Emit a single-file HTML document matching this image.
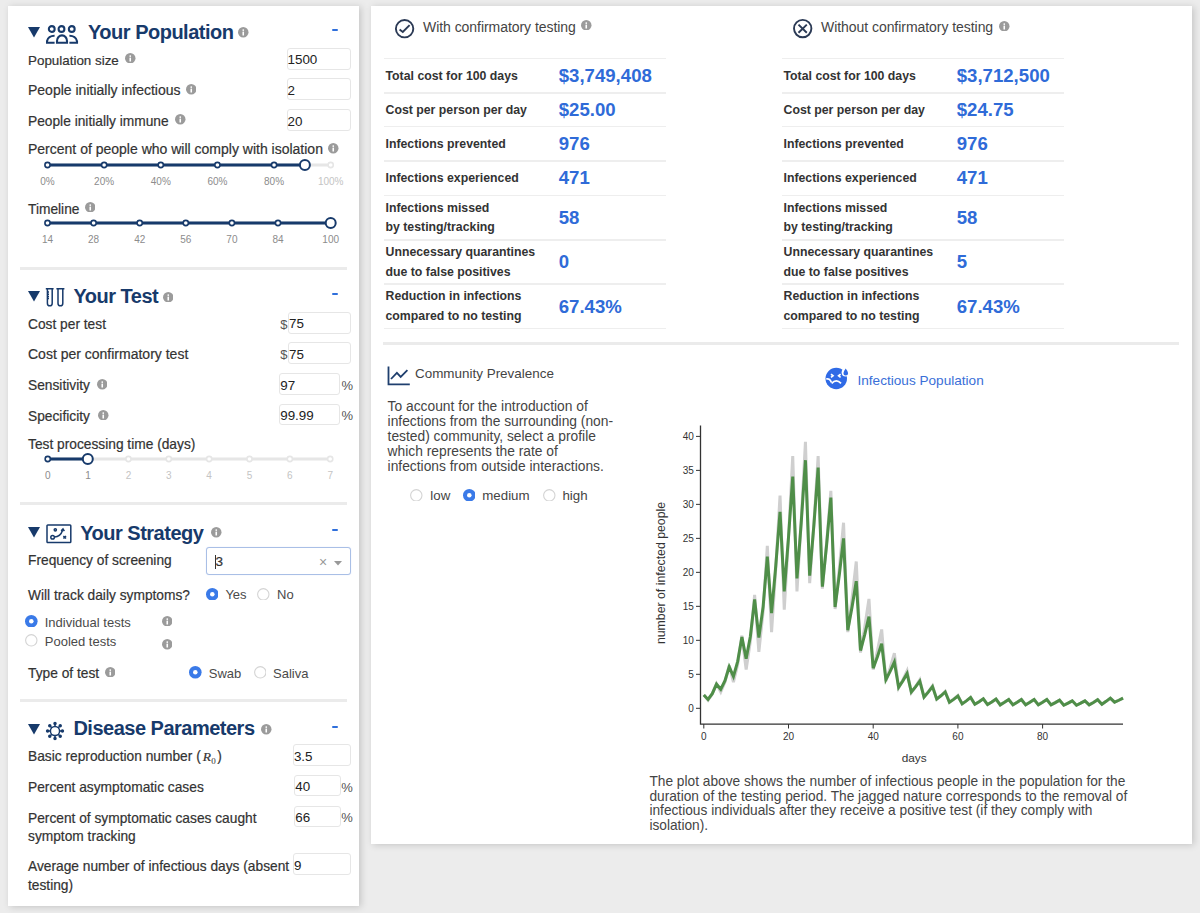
<!DOCTYPE html>
<html><head><meta charset="utf-8"><style>
html,body{margin:0;padding:0;}
body{width:1200px;height:913px;background:#ececec;position:relative;overflow:hidden;font-family:"Liberation Sans",sans-serif;}
.t{position:absolute;white-space:nowrap;}
.s{-webkit-text-stroke:0.2px currentColor;}
.b{position:absolute;display:block;}
.panel{position:absolute;background:#fff;box-shadow:2px 1px 7px rgba(0,0,0,0.17);}
</style></head><body>

<div class="panel" style="left:7.5px;top:5.5px;width:351.5px;height:900px"></div>
<svg class="b" style="left:28px;top:27.00px" width="12" height="11" viewBox="0 0 12 11"><polygon points="0,0 12,0 6,10.5" fill="#173a6b"/></svg>
<svg class="b" style="left:46px;top:24px" width="33" height="20" viewBox="0 0 33 20" fill="none" stroke="#173a6b" stroke-width="2.1"><circle cx="5.75" cy="5" r="2.9"/><circle cx="15.5" cy="5" r="2.9"/><circle cx="25.75" cy="5" r="2.9"/><path d="M8.6 18.8 H1 V17.2 A7.5 6.5 0 0 1 8.6 11.7"/><path d="M11 18.8 V17 A5 5.6 0 0 1 21 17 V18.8 Z"/><path d="M23.4 18.8 H31 V17.2 A7.5 6.5 0 0 0 23.4 11.7"/></svg>
<div class="t" style="left:88.00px;top:19.67px;font-size:20px;line-height:25.0px;font-weight:700;color:#173a6b;letter-spacing:-0.5px;">Your Population</div>
<svg class="b" style="left:238.35px;top:27.15px" width="10.5" height="10.5" viewBox="0 0 10 10"><circle cx="5" cy="5" r="5" fill="#9b9b9b"/><circle cx="5" cy="2.9" r="0.85" fill="#fff"/><rect x="4.25" y="4.3" width="1.5" height="3.9" rx="0.4" fill="#fff"/></svg>
<div class="b" style="left:331.50px;top:29.00px;width:6.30px;height:2.00px;background:#2f6fdb;border-radius:1px;"></div>
<div class="t s" style="left:28.00px;top:52.88px;font-size:13.4px;line-height:16.75px;color:#333;">Population size</div>
<svg class="b" style="left:125.15px;top:52.75px" width="10.5" height="10.5" viewBox="0 0 10 10"><circle cx="5" cy="5" r="5" fill="#9b9b9b"/><circle cx="5" cy="2.9" r="0.85" fill="#fff"/><rect x="4.25" y="4.3" width="1.5" height="3.9" rx="0.4" fill="#fff"/></svg>
<div class="t s" style="left:28.00px;top:82.00px;font-size:14px;line-height:17.5px;color:#333;">People initially infectious</div>
<svg class="b" style="left:185.95px;top:84.15px" width="10.5" height="10.5" viewBox="0 0 10 10"><circle cx="5" cy="5" r="5" fill="#9b9b9b"/><circle cx="5" cy="2.9" r="0.85" fill="#fff"/><rect x="4.25" y="4.3" width="1.5" height="3.9" rx="0.4" fill="#fff"/></svg>
<div class="t s" style="left:28.00px;top:113.04px;font-size:13.75px;line-height:17.19px;color:#333;">People initially immune</div>
<svg class="b" style="left:175.15px;top:114.35px" width="10.5" height="10.5" viewBox="0 0 10 10"><circle cx="5" cy="5" r="5" fill="#9b9b9b"/><circle cx="5" cy="2.9" r="0.85" fill="#fff"/><rect x="4.25" y="4.3" width="1.5" height="3.9" rx="0.4" fill="#fff"/></svg>
<div class="b" style="left:286.50px;top:48.00px;width:64.20px;height:22.00px;border:1px solid #e6e6e6;border-radius:3px;box-sizing:border-box;background:#fff;"></div>
<div class="t" style="left:287.50px;top:52.48px;font-size:13.4px;line-height:16.75px;color:#222;">1500</div>
<div class="b" style="left:286.50px;top:78.30px;width:64.20px;height:21.90px;border:1px solid #e6e6e6;border-radius:3px;box-sizing:border-box;background:#fff;"></div>
<div class="t" style="left:287.50px;top:82.73px;font-size:13.4px;line-height:16.75px;color:#222;">2</div>
<div class="b" style="left:286.50px;top:109.20px;width:64.20px;height:21.90px;border:1px solid #e6e6e6;border-radius:3px;box-sizing:border-box;background:#fff;"></div>
<div class="t" style="left:287.50px;top:113.63px;font-size:13.4px;line-height:16.75px;color:#222;">20</div>
<div class="t s" style="left:28.00px;top:141.20px;font-size:14px;line-height:17.5px;color:#333;">Percent of people who will comply with isolation</div>
<svg class="b" style="left:328.35px;top:143.35px" width="10.5" height="10.5" viewBox="0 0 10 10"><circle cx="5" cy="5" r="5" fill="#9b9b9b"/><circle cx="5" cy="2.9" r="0.85" fill="#fff"/><rect x="4.25" y="4.3" width="1.5" height="3.9" rx="0.4" fill="#fff"/></svg>
<svg class="b" style="left:0;top:156.60px" width="360" height="16" viewBox="0 156.60 360 16">
<line x1="47.5" y1="164.6" x2="330.7" y2="164.6" stroke="#e6e6e6" stroke-width="3"/>
<line x1="47.5" y1="164.6" x2="304.9" y2="164.6" stroke="#173a6b" stroke-width="3"/>
<circle cx="47.50" cy="164.6" r="2.6" fill="#fff" stroke="#173a6b" stroke-width="1.6"/>
<circle cx="104.14" cy="164.6" r="2.6" fill="#fff" stroke="#173a6b" stroke-width="1.6"/>
<circle cx="160.78" cy="164.6" r="2.6" fill="#fff" stroke="#173a6b" stroke-width="1.6"/>
<circle cx="217.42" cy="164.6" r="2.6" fill="#fff" stroke="#173a6b" stroke-width="1.6"/>
<circle cx="274.06" cy="164.6" r="2.6" fill="#fff" stroke="#173a6b" stroke-width="1.6"/>
<circle cx="330.70" cy="164.6" r="2.6" fill="#fff" stroke="#e6e6e6" stroke-width="1.6"/>
<circle cx="304.90" cy="164.6" r="5" fill="#fff" stroke="#173a6b" stroke-width="2"/>
</svg>
<div class="t" style="left:47.50px;top:175.58px;font-size:10px;line-height:12.5px;color:#8c8c8c;transform:translateX(-50%);">0%</div>
<div class="t" style="left:104.14px;top:175.58px;font-size:10px;line-height:12.5px;color:#8c8c8c;transform:translateX(-50%);">20%</div>
<div class="t" style="left:160.78px;top:175.58px;font-size:10px;line-height:12.5px;color:#8c8c8c;transform:translateX(-50%);">40%</div>
<div class="t" style="left:217.42px;top:175.58px;font-size:10px;line-height:12.5px;color:#8c8c8c;transform:translateX(-50%);">60%</div>
<div class="t" style="left:274.06px;top:175.58px;font-size:10px;line-height:12.5px;color:#8c8c8c;transform:translateX(-50%);">80%</div>
<div class="t" style="left:330.70px;top:175.58px;font-size:10px;line-height:12.5px;color:#c4c4c4;transform:translateX(-50%);">100%</div>
<div class="t s" style="left:28.00px;top:200.64px;font-size:13.75px;line-height:17.19px;color:#333;">Timeline</div>
<svg class="b" style="left:84.75px;top:201.95px" width="10.5" height="10.5" viewBox="0 0 10 10"><circle cx="5" cy="5" r="5" fill="#9b9b9b"/><circle cx="5" cy="2.9" r="0.85" fill="#fff"/><rect x="4.25" y="4.3" width="1.5" height="3.9" rx="0.4" fill="#fff"/></svg>
<svg class="b" style="left:0;top:215.30px" width="360" height="16" viewBox="0 215.30 360 16">
<line x1="47.5" y1="223.3" x2="330.7" y2="223.3" stroke="#e6e6e6" stroke-width="3"/>
<line x1="47.5" y1="223.3" x2="330.7" y2="223.3" stroke="#173a6b" stroke-width="3"/>
<circle cx="47.50" cy="223.3" r="2.6" fill="#fff" stroke="#173a6b" stroke-width="1.6"/>
<circle cx="93.60" cy="223.3" r="2.6" fill="#fff" stroke="#173a6b" stroke-width="1.6"/>
<circle cx="139.70" cy="223.3" r="2.6" fill="#fff" stroke="#173a6b" stroke-width="1.6"/>
<circle cx="185.80" cy="223.3" r="2.6" fill="#fff" stroke="#173a6b" stroke-width="1.6"/>
<circle cx="231.90" cy="223.3" r="2.6" fill="#fff" stroke="#173a6b" stroke-width="1.6"/>
<circle cx="278.00" cy="223.3" r="2.6" fill="#fff" stroke="#173a6b" stroke-width="1.6"/>
<circle cx="330.70" cy="223.3" r="2.6" fill="#fff" stroke="#173a6b" stroke-width="1.6"/>
<circle cx="330.70" cy="223.3" r="5" fill="#fff" stroke="#173a6b" stroke-width="2"/>
</svg>
<div class="t" style="left:47.50px;top:234.19px;font-size:10px;line-height:12.5px;color:#8c8c8c;transform:translateX(-50%);">14</div>
<div class="t" style="left:93.60px;top:234.19px;font-size:10px;line-height:12.5px;color:#8c8c8c;transform:translateX(-50%);">28</div>
<div class="t" style="left:139.70px;top:234.19px;font-size:10px;line-height:12.5px;color:#8c8c8c;transform:translateX(-50%);">42</div>
<div class="t" style="left:185.80px;top:234.19px;font-size:10px;line-height:12.5px;color:#8c8c8c;transform:translateX(-50%);">56</div>
<div class="t" style="left:231.90px;top:234.19px;font-size:10px;line-height:12.5px;color:#8c8c8c;transform:translateX(-50%);">70</div>
<div class="t" style="left:278.00px;top:234.19px;font-size:10px;line-height:12.5px;color:#8c8c8c;transform:translateX(-50%);">84</div>
<div class="t" style="left:330.70px;top:234.19px;font-size:10px;line-height:12.5px;color:#8c8c8c;transform:translateX(-50%);">100</div>
<div class="b" style="left:20.00px;top:266.50px;width:327.00px;height:3.00px;background:#ebebeb;"></div>
<svg class="b" style="left:28px;top:291.00px" width="12" height="11" viewBox="0 0 12 11"><polygon points="0,0 12,0 6,10.5" fill="#173a6b"/></svg>
<svg class="b" style="left:45px;top:287px" width="21" height="21" viewBox="0 0 21 21" fill="none" stroke="#173a6b" stroke-width="1.5"><path d="M0.8 1.8 H8.6 M2.4 1.8 V16.2 A2.4 2.6 0 0 0 7.2 16.2 V1.8"/><path d="M2.4 5 H4 M2.4 7.2 H4 M2.4 9.4 H4 M2.4 11.6 H4"/><path d="M11.4 1.8 H19.4 M13 1.8 V16.2 A2.4 2.6 0 0 0 17.8 16.2 V1.8"/></svg>
<div class="t" style="left:73.40px;top:284.37px;font-size:20px;line-height:25.0px;font-weight:700;color:#173a6b;letter-spacing:-0.5px;">Your Test</div>
<svg class="b" style="left:162.75px;top:291.75px" width="10.5" height="10.5" viewBox="0 0 10 10"><circle cx="5" cy="5" r="5" fill="#9b9b9b"/><circle cx="5" cy="2.9" r="0.85" fill="#fff"/><rect x="4.25" y="4.3" width="1.5" height="3.9" rx="0.4" fill="#fff"/></svg>
<div class="b" style="left:331.50px;top:293.00px;width:6.30px;height:2.00px;background:#2f6fdb;border-radius:1px;"></div>
<div class="t s" style="left:28.00px;top:315.74px;font-size:13.75px;line-height:17.19px;color:#333;">Cost per test</div>
<div class="t s" style="left:28.00px;top:346.30px;font-size:14px;line-height:17.5px;color:#333;">Cost per confirmatory test</div>
<div class="t s" style="left:28.00px;top:376.74px;font-size:13.75px;line-height:17.19px;color:#333;">Sensitivity</div>
<svg class="b" style="left:96.55px;top:379.05px" width="10.5" height="10.5" viewBox="0 0 10 10"><circle cx="5" cy="5" r="5" fill="#9b9b9b"/><circle cx="5" cy="2.9" r="0.85" fill="#fff"/><rect x="4.25" y="4.3" width="1.5" height="3.9" rx="0.4" fill="#fff"/></svg>
<div class="t s" style="left:28.00px;top:407.54px;font-size:13.75px;line-height:17.19px;color:#333;">Specificity</div>
<svg class="b" style="left:98.05px;top:409.75px" width="10.5" height="10.5" viewBox="0 0 10 10"><circle cx="5" cy="5" r="5" fill="#9b9b9b"/><circle cx="5" cy="2.9" r="0.85" fill="#fff"/><rect x="4.25" y="4.3" width="1.5" height="3.9" rx="0.4" fill="#fff"/></svg>
<div class="t" style="left:280.30px;top:316.57px;font-size:13px;line-height:16.25px;color:#555;">$</div>
<div class="b" style="left:288.10px;top:311.70px;width:62.65px;height:22.20px;border:1px solid #e6e6e6;border-radius:3px;box-sizing:border-box;background:#fff;"></div>
<div class="t" style="left:289.10px;top:316.28px;font-size:13.4px;line-height:16.75px;color:#222;">75</div>
<div class="t" style="left:280.30px;top:347.37px;font-size:13px;line-height:16.25px;color:#555;">$</div>
<div class="b" style="left:288.10px;top:342.40px;width:62.65px;height:21.90px;border:1px solid #e6e6e6;border-radius:3px;box-sizing:border-box;background:#fff;"></div>
<div class="t" style="left:289.10px;top:346.83px;font-size:13.4px;line-height:16.75px;color:#222;">75</div>
<div class="b" style="left:279.20px;top:373.30px;width:61.20px;height:21.70px;border:1px solid #e6e6e6;border-radius:3px;box-sizing:border-box;background:#fff;"></div>
<div class="t" style="left:280.20px;top:377.63px;font-size:13.4px;line-height:16.75px;color:#222;">97</div>
<div class="t" style="left:341.40px;top:377.87px;font-size:13px;line-height:16.25px;color:#555;">%</div>
<div class="b" style="left:279.20px;top:403.60px;width:61.20px;height:21.60px;border:1px solid #e6e6e6;border-radius:3px;box-sizing:border-box;background:#fff;"></div>
<div class="t" style="left:280.20px;top:407.88px;font-size:13.4px;line-height:16.75px;color:#222;">99.99</div>
<div class="t" style="left:341.40px;top:408.17px;font-size:13px;line-height:16.25px;color:#555;">%</div>
<div class="t s" style="left:28.00px;top:435.94px;font-size:13.75px;line-height:17.19px;color:#333;">Test processing time (days)</div>
<svg class="b" style="left:0;top:450.50px" width="360" height="16" viewBox="0 450.50 360 16">
<line x1="47.75" y1="458.5" x2="330.2" y2="458.5" stroke="#e6e6e6" stroke-width="3"/>
<line x1="47.75" y1="458.5" x2="87.8" y2="458.5" stroke="#173a6b" stroke-width="3"/>
<circle cx="47.75" cy="458.5" r="2.6" fill="#fff" stroke="#173a6b" stroke-width="1.6"/>
<circle cx="88.10" cy="458.5" r="2.6" fill="#fff" stroke="#173a6b" stroke-width="1.6"/>
<circle cx="128.45" cy="458.5" r="2.6" fill="#fff" stroke="#e6e6e6" stroke-width="1.6"/>
<circle cx="168.80" cy="458.5" r="2.6" fill="#fff" stroke="#e6e6e6" stroke-width="1.6"/>
<circle cx="209.15" cy="458.5" r="2.6" fill="#fff" stroke="#e6e6e6" stroke-width="1.6"/>
<circle cx="249.50" cy="458.5" r="2.6" fill="#fff" stroke="#e6e6e6" stroke-width="1.6"/>
<circle cx="289.85" cy="458.5" r="2.6" fill="#fff" stroke="#e6e6e6" stroke-width="1.6"/>
<circle cx="330.20" cy="458.5" r="2.6" fill="#fff" stroke="#e6e6e6" stroke-width="1.6"/>
<circle cx="87.80" cy="458.5" r="5" fill="#fff" stroke="#173a6b" stroke-width="2"/>
</svg>
<div class="t" style="left:47.75px;top:469.63px;font-size:10px;line-height:12.5px;color:#8c8c8c;transform:translateX(-50%);">0</div>
<div class="t" style="left:88.10px;top:469.63px;font-size:10px;line-height:12.5px;color:#8c8c8c;transform:translateX(-50%);">1</div>
<div class="t" style="left:128.45px;top:469.63px;font-size:10px;line-height:12.5px;color:#c4c4c4;transform:translateX(-50%);">2</div>
<div class="t" style="left:168.80px;top:469.63px;font-size:10px;line-height:12.5px;color:#c4c4c4;transform:translateX(-50%);">3</div>
<div class="t" style="left:209.15px;top:469.63px;font-size:10px;line-height:12.5px;color:#c4c4c4;transform:translateX(-50%);">4</div>
<div class="t" style="left:249.50px;top:469.63px;font-size:10px;line-height:12.5px;color:#c4c4c4;transform:translateX(-50%);">5</div>
<div class="t" style="left:289.85px;top:469.63px;font-size:10px;line-height:12.5px;color:#c4c4c4;transform:translateX(-50%);">6</div>
<div class="t" style="left:330.20px;top:469.63px;font-size:10px;line-height:12.5px;color:#c4c4c4;transform:translateX(-50%);">7</div>
<div class="b" style="left:20.00px;top:501.50px;width:327.00px;height:3.00px;background:#ebebeb;"></div>
<svg class="b" style="left:28px;top:527.00px" width="12" height="11" viewBox="0 0 12 11"><polygon points="0,0 12,0 6,10.5" fill="#173a6b"/></svg>
<svg class="b" style="left:46px;top:523.5px" width="26" height="20" viewBox="0 0 26 20" fill="none" stroke="#173a6b" stroke-width="1.5"><rect x="1" y="1" width="23.8" height="17.6" rx="0.8"/><circle cx="6.6" cy="13.2" r="1.8"/><circle cx="9.3" cy="5.8" r="1.1"/><path d="M8.4 13.1 Q14.5 12.8 16.6 6.3"/><path d="M15.2 6.9 L17 5.1 L18.3 7.2" stroke-width="1.6"/><path d="M17.4 11.9 L20 14.6 M20 11.9 L17.4 14.6"/></svg>
<div class="t" style="left:80.20px;top:520.67px;font-size:20px;line-height:25.0px;font-weight:700;color:#173a6b;letter-spacing:-0.5px;">Your Strategy</div>
<svg class="b" style="left:211.25px;top:527.15px" width="10.5" height="10.5" viewBox="0 0 10 10"><circle cx="5" cy="5" r="5" fill="#9b9b9b"/><circle cx="5" cy="2.9" r="0.85" fill="#fff"/><rect x="4.25" y="4.3" width="1.5" height="3.9" rx="0.4" fill="#fff"/></svg>
<div class="b" style="left:331.50px;top:529.00px;width:6.30px;height:2.00px;background:#2f6fdb;border-radius:1px;"></div>
<div class="t s" style="left:28.00px;top:552.04px;font-size:13.75px;line-height:17.19px;color:#333;">Frequency of screening</div>
<div class="b" style="left:205.60px;top:547.40px;width:145.20px;height:28.00px;border:1px solid #a9bfe6;border-radius:3px;box-sizing:border-box;background:#fff;box-shadow:0 0 1px rgba(80,130,220,0.3);"></div>
<div class="b" style="left:214.60px;top:555.00px;width:1.00px;height:14.00px;background:#333;"></div>
<div class="t s" style="left:215.50px;top:553.98px;font-size:13.5px;line-height:16.88px;color:#333;">3</div>
<div class="t" style="left:323.20px;top:553.50px;font-size:14px;line-height:17.5px;color:#999;transform:translateX(-50%);">×</div>
<svg class="b" style="left:334px;top:560.5px" width="8" height="5" viewBox="0 0 8 5"><polygon points="0,0 8,0 4,4.5" fill="#999"/></svg>
<div class="t s" style="left:28.00px;top:586.54px;font-size:13.75px;line-height:17.19px;color:#333;">Will track daily symptoms?</div>
<svg class="b" style="left:205.50px;top:587.50px" width="12.6" height="12.6" viewBox="0 0 12.6 12.6"><circle cx="6.3" cy="6.3" r="6.3" fill="#3a7ae8"/><circle cx="6.3" cy="6.3" r="2.27" fill="#fff"/></svg>
<div class="t" style="left:225.40px;top:587.27px;font-size:13px;line-height:16.25px;color:#4a4a4a;">Yes</div>
<svg class="b" style="left:257.35px;top:587.50px" width="12.6" height="12.6" viewBox="0 0 12.6 12.6"><circle cx="6.3" cy="6.3" r="5.70" fill="#fff" stroke="#d4d4d4" stroke-width="1.1"/></svg>
<div class="t" style="left:277.10px;top:587.27px;font-size:13px;line-height:16.25px;color:#4a4a4a;">No</div>
<svg class="b" style="left:25.30px;top:614.90px" width="12.6" height="12.6" viewBox="0 0 12.6 12.6"><circle cx="6.3" cy="6.3" r="6.3" fill="#3a7ae8"/><circle cx="6.3" cy="6.3" r="2.27" fill="#fff"/></svg>
<div class="t" style="left:44.75px;top:614.72px;font-size:13px;line-height:16.25px;color:#4a4a4a;">Individual tests</div>
<svg class="b" style="left:161.55px;top:615.50px" width="10.5" height="10.5" viewBox="0 0 10 10"><circle cx="5" cy="5" r="5" fill="#9b9b9b"/><circle cx="5" cy="2.9" r="0.85" fill="#fff"/><rect x="4.25" y="4.3" width="1.5" height="3.9" rx="0.4" fill="#fff"/></svg>
<svg class="b" style="left:25.30px;top:633.95px" width="12.6" height="12.6" viewBox="0 0 12.6 12.6"><circle cx="6.3" cy="6.3" r="5.70" fill="#fff" stroke="#d4d4d4" stroke-width="1.1"/></svg>
<div class="t" style="left:44.75px;top:633.77px;font-size:13px;line-height:16.25px;color:#4a4a4a;">Pooled tests</div>
<svg class="b" style="left:161.55px;top:639.05px" width="10.5" height="10.5" viewBox="0 0 10 10"><circle cx="5" cy="5" r="5" fill="#9b9b9b"/><circle cx="5" cy="2.9" r="0.85" fill="#fff"/><rect x="4.25" y="4.3" width="1.5" height="3.9" rx="0.4" fill="#fff"/></svg>
<div class="t s" style="left:28.00px;top:664.99px;font-size:13.75px;line-height:17.19px;color:#333;">Type of test</div>
<svg class="b" style="left:104.55px;top:666.50px" width="10.5" height="10.5" viewBox="0 0 10 10"><circle cx="5" cy="5" r="5" fill="#9b9b9b"/><circle cx="5" cy="2.9" r="0.85" fill="#fff"/><rect x="4.25" y="4.3" width="1.5" height="3.9" rx="0.4" fill="#fff"/></svg>
<svg class="b" style="left:189.45px;top:666.00px" width="12.6" height="12.6" viewBox="0 0 12.6 12.6"><circle cx="6.3" cy="6.3" r="6.3" fill="#3a7ae8"/><circle cx="6.3" cy="6.3" r="2.27" fill="#fff"/></svg>
<div class="t" style="left:208.80px;top:665.72px;font-size:13px;line-height:16.25px;color:#4a4a4a;">Swab</div>
<svg class="b" style="left:253.60px;top:666.00px" width="12.6" height="12.6" viewBox="0 0 12.6 12.6"><circle cx="6.3" cy="6.3" r="5.70" fill="#fff" stroke="#d4d4d4" stroke-width="1.1"/></svg>
<div class="t" style="left:273.00px;top:665.72px;font-size:13px;line-height:16.25px;color:#4a4a4a;">Saliva</div>
<div class="b" style="left:20.00px;top:698.50px;width:327.00px;height:3.00px;background:#ebebeb;"></div>
<svg class="b" style="left:28px;top:723.50px" width="12" height="11" viewBox="0 0 12 11"><polygon points="0,0 12,0 6,10.5" fill="#173a6b"/></svg>
<svg class="b" style="left:45.25px;top:720.5px" width="20" height="20" viewBox="0 0 20 20" fill="none" stroke="#173a6b" stroke-width="1.5"><circle cx="10" cy="10" r="4.6" /><line x1="14.60" y1="10.00" x2="17.40" y2="10.00"/><circle cx="17.40" cy="10.00" r="1.0" fill="#173a6b"/><line x1="13.25" y1="13.25" x2="15.23" y2="15.23"/><circle cx="15.23" cy="15.23" r="1.0" fill="#173a6b"/><line x1="10.00" y1="14.60" x2="10.00" y2="17.40"/><circle cx="10.00" cy="17.40" r="1.0" fill="#173a6b"/><line x1="6.75" y1="13.25" x2="4.77" y2="15.23"/><circle cx="4.77" cy="15.23" r="1.0" fill="#173a6b"/><line x1="5.40" y1="10.00" x2="2.60" y2="10.00"/><circle cx="2.60" cy="10.00" r="1.0" fill="#173a6b"/><line x1="6.75" y1="6.75" x2="4.77" y2="4.77"/><circle cx="4.77" cy="4.77" r="1.0" fill="#173a6b"/><line x1="10.00" y1="5.40" x2="10.00" y2="2.60"/><circle cx="10.00" cy="2.60" r="1.0" fill="#173a6b"/><line x1="13.25" y1="6.75" x2="15.23" y2="4.77"/><circle cx="15.23" cy="4.77" r="1.0" fill="#173a6b"/></svg>
<div class="t" style="left:73.40px;top:715.67px;font-size:20px;line-height:25.0px;font-weight:700;color:#173a6b;letter-spacing:-0.5px;">Disease Parameters</div>
<svg class="b" style="left:261.45px;top:724.05px" width="10.5" height="10.5" viewBox="0 0 10 10"><circle cx="5" cy="5" r="5" fill="#9b9b9b"/><circle cx="5" cy="2.9" r="0.85" fill="#fff"/><rect x="4.25" y="4.3" width="1.5" height="3.9" rx="0.4" fill="#fff"/></svg>
<div class="b" style="left:331.50px;top:726.30px;width:6.30px;height:2.00px;background:#2f6fdb;border-radius:1px;"></div>
<div class="t s" style="left:28.00px;top:748.24px;font-size:13.75px;line-height:17.19px;color:#333;">Basic reproduction number (<span style="margin-left:2px;font-family:'Liberation Serif';font-style:italic;font-size:13.5px">R</span><span style="font-family:'Liberation Serif';font-size:9px;position:relative;top:2.5px;margin-left:0.3px;-webkit-text-stroke:0">0</span><span style="margin-left:1.5px">)</span></div>
<div class="t s" style="left:28.00px;top:779.14px;font-size:13.75px;line-height:17.19px;color:#333;">Percent asymptomatic cases</div>
<div class="t s" style="left:28.00px;top:809.64px;font-size:13.75px;line-height:17.19px;color:#333;">Percent of symptomatic cases caught</div>
<div class="t s" style="left:28.00px;top:828.44px;font-size:13.75px;line-height:17.19px;color:#333;">symptom tracking</div>
<div class="t s" style="left:28.00px;top:858.34px;font-size:13.75px;line-height:17.19px;color:#333;">Average number of infectious days (absent</div>
<div class="t s" style="left:28.00px;top:876.84px;font-size:13.75px;line-height:17.19px;color:#333;">testing)</div>
<div class="b" style="left:292.90px;top:744.40px;width:57.90px;height:21.70px;border:1px solid #e6e6e6;border-radius:3px;box-sizing:border-box;background:#fff;"></div>
<div class="t" style="left:293.90px;top:748.73px;font-size:13.4px;line-height:16.75px;color:#222;">3.5</div>
<div class="b" style="left:294.20px;top:774.80px;width:46.50px;height:21.70px;border:1px solid #e6e6e6;border-radius:3px;box-sizing:border-box;background:#fff;"></div>
<div class="t" style="left:295.20px;top:779.13px;font-size:13.4px;line-height:16.75px;color:#222;">40</div>
<div class="t" style="left:341.20px;top:779.77px;font-size:13px;line-height:16.25px;color:#555;">%</div>
<div class="b" style="left:294.20px;top:805.50px;width:46.50px;height:21.70px;border:1px solid #e6e6e6;border-radius:3px;box-sizing:border-box;background:#fff;"></div>
<div class="t" style="left:295.20px;top:809.83px;font-size:13.4px;line-height:16.75px;color:#222;">66</div>
<div class="t" style="left:341.20px;top:810.47px;font-size:13px;line-height:16.25px;color:#555;">%</div>
<div class="b" style="left:292.90px;top:853.40px;width:57.90px;height:21.70px;border:1px solid #e6e6e6;border-radius:3px;box-sizing:border-box;background:#fff;"></div>
<div class="t" style="left:293.90px;top:857.73px;font-size:13.4px;line-height:16.75px;color:#222;">9</div>
<div class="panel" style="left:371px;top:5.5px;width:821px;height:838.3px"></div>
<svg class="b" style="left:394px;top:17.5px" width="21" height="21" viewBox="0 0 21 21" fill="none" stroke="#2b3a55" stroke-width="1.9"><circle cx="10.6" cy="10.7" r="8.7"/><path d="M5.6 11.4 L8.8 14 L15.6 7.2"/></svg>
<div class="t" style="left:423.00px;top:18.50px;font-size:14px;line-height:17.5px;color:#444;letter-spacing:-0.05px;">With confirmatory testing</div>
<svg class="b" style="left:581.35px;top:19.75px" width="10.5" height="10.5" viewBox="0 0 10 10"><circle cx="5" cy="5" r="5" fill="#9b9b9b"/><circle cx="5" cy="2.9" r="0.85" fill="#fff"/><rect x="4.25" y="4.3" width="1.5" height="3.9" rx="0.4" fill="#fff"/></svg>
<svg class="b" style="left:792px;top:17.5px" width="21" height="21" viewBox="0 0 21 21" fill="none" stroke="#2b3a55" stroke-width="1.9"><circle cx="10.7" cy="10.6" r="8.7"/><path d="M6.5 6.6 L14.8 14.8 M14.8 6.6 L6.5 14.8"/></svg>
<div class="t" style="left:821.00px;top:18.50px;font-size:14px;line-height:17.5px;color:#444;letter-spacing:-0.05px;">Without confirmatory testing</div>
<svg class="b" style="left:999.25px;top:20.75px" width="10.5" height="10.5" viewBox="0 0 10 10"><circle cx="5" cy="5" r="5" fill="#9b9b9b"/><circle cx="5" cy="2.9" r="0.85" fill="#fff"/><rect x="4.25" y="4.3" width="1.5" height="3.9" rx="0.4" fill="#fff"/></svg>
<div class="b" style="left:384.00px;top:57.50px;width:282.00px;height:1.50px;background:#eeeeee;"></div>
<div class="b" style="left:384.00px;top:92.00px;width:282.00px;height:1.50px;background:#eeeeee;"></div>
<div class="b" style="left:384.00px;top:125.75px;width:282.00px;height:1.50px;background:#eeeeee;"></div>
<div class="b" style="left:384.00px;top:160.00px;width:282.00px;height:1.50px;background:#eeeeee;"></div>
<div class="b" style="left:384.00px;top:194.50px;width:282.00px;height:1.50px;background:#eeeeee;"></div>
<div class="b" style="left:384.00px;top:239.00px;width:282.00px;height:1.50px;background:#eeeeee;"></div>
<div class="b" style="left:384.00px;top:283.25px;width:282.00px;height:1.50px;background:#eeeeee;"></div>
<div class="b" style="left:384.00px;top:327.75px;width:282.00px;height:1.50px;background:#eeeeee;"></div>
<div class="t" style="left:385.50px;top:68.65px;font-size:12.3px;line-height:15.38px;font-weight:700;color:#333;">Total cost for 100 days</div>
<div class="t" style="left:558.75px;top:63.93px;font-size:18.6px;line-height:23.25px;font-weight:700;color:#2f6bd8;">$3,749,408</div>
<div class="t" style="left:385.50px;top:103.15px;font-size:12.3px;line-height:15.38px;font-weight:700;color:#333;">Cost per person per day</div>
<div class="t" style="left:558.75px;top:98.43px;font-size:18.6px;line-height:23.25px;font-weight:700;color:#2f6bd8;">$25.00</div>
<div class="t" style="left:385.50px;top:136.90px;font-size:12.3px;line-height:15.38px;font-weight:700;color:#333;">Infections prevented</div>
<div class="t" style="left:558.75px;top:132.18px;font-size:18.6px;line-height:23.25px;font-weight:700;color:#2f6bd8;">976</div>
<div class="t" style="left:385.50px;top:171.15px;font-size:12.3px;line-height:15.38px;font-weight:700;color:#333;">Infections experienced</div>
<div class="t" style="left:558.75px;top:166.43px;font-size:18.6px;line-height:23.25px;font-weight:700;color:#2f6bd8;">471</div>
<div class="t" style="left:385.50px;top:200.65px;font-size:12.3px;line-height:15.38px;font-weight:700;color:#333;">Infections missed</div>
<div class="t" style="left:385.50px;top:220.45px;font-size:12.3px;line-height:15.38px;font-weight:700;color:#333;">by testing/tracking</div>
<div class="t" style="left:558.75px;top:205.93px;font-size:18.6px;line-height:23.25px;font-weight:700;color:#2f6bd8;">58</div>
<div class="t" style="left:385.50px;top:245.15px;font-size:12.3px;line-height:15.38px;font-weight:700;color:#333;">Unnecessary quarantines</div>
<div class="t" style="left:385.50px;top:264.95px;font-size:12.3px;line-height:15.38px;font-weight:700;color:#333;">due to false positives</div>
<div class="t" style="left:558.75px;top:250.43px;font-size:18.6px;line-height:23.25px;font-weight:700;color:#2f6bd8;">0</div>
<div class="t" style="left:385.50px;top:289.40px;font-size:12.3px;line-height:15.38px;font-weight:700;color:#333;">Reduction in infections</div>
<div class="t" style="left:385.50px;top:309.20px;font-size:12.3px;line-height:15.38px;font-weight:700;color:#333;">compared to no testing</div>
<div class="t" style="left:558.75px;top:294.68px;font-size:18.6px;line-height:23.25px;font-weight:700;color:#2f6bd8;">67.43%</div>
<div class="b" style="left:782.00px;top:57.50px;width:282.00px;height:1.50px;background:#eeeeee;"></div>
<div class="b" style="left:782.00px;top:92.00px;width:282.00px;height:1.50px;background:#eeeeee;"></div>
<div class="b" style="left:782.00px;top:125.75px;width:282.00px;height:1.50px;background:#eeeeee;"></div>
<div class="b" style="left:782.00px;top:160.00px;width:282.00px;height:1.50px;background:#eeeeee;"></div>
<div class="b" style="left:782.00px;top:194.50px;width:282.00px;height:1.50px;background:#eeeeee;"></div>
<div class="b" style="left:782.00px;top:239.00px;width:282.00px;height:1.50px;background:#eeeeee;"></div>
<div class="b" style="left:782.00px;top:283.25px;width:282.00px;height:1.50px;background:#eeeeee;"></div>
<div class="b" style="left:782.00px;top:327.75px;width:282.00px;height:1.50px;background:#eeeeee;"></div>
<div class="t" style="left:783.50px;top:68.65px;font-size:12.3px;line-height:15.38px;font-weight:700;color:#333;">Total cost for 100 days</div>
<div class="t" style="left:956.75px;top:63.93px;font-size:18.6px;line-height:23.25px;font-weight:700;color:#2f6bd8;">$3,712,500</div>
<div class="t" style="left:783.50px;top:103.15px;font-size:12.3px;line-height:15.38px;font-weight:700;color:#333;">Cost per person per day</div>
<div class="t" style="left:956.75px;top:98.43px;font-size:18.6px;line-height:23.25px;font-weight:700;color:#2f6bd8;">$24.75</div>
<div class="t" style="left:783.50px;top:136.90px;font-size:12.3px;line-height:15.38px;font-weight:700;color:#333;">Infections prevented</div>
<div class="t" style="left:956.75px;top:132.18px;font-size:18.6px;line-height:23.25px;font-weight:700;color:#2f6bd8;">976</div>
<div class="t" style="left:783.50px;top:171.15px;font-size:12.3px;line-height:15.38px;font-weight:700;color:#333;">Infections experienced</div>
<div class="t" style="left:956.75px;top:166.43px;font-size:18.6px;line-height:23.25px;font-weight:700;color:#2f6bd8;">471</div>
<div class="t" style="left:783.50px;top:200.65px;font-size:12.3px;line-height:15.38px;font-weight:700;color:#333;">Infections missed</div>
<div class="t" style="left:783.50px;top:220.45px;font-size:12.3px;line-height:15.38px;font-weight:700;color:#333;">by testing/tracking</div>
<div class="t" style="left:956.75px;top:205.93px;font-size:18.6px;line-height:23.25px;font-weight:700;color:#2f6bd8;">58</div>
<div class="t" style="left:783.50px;top:245.15px;font-size:12.3px;line-height:15.38px;font-weight:700;color:#333;">Unnecessary quarantines</div>
<div class="t" style="left:783.50px;top:264.95px;font-size:12.3px;line-height:15.38px;font-weight:700;color:#333;">due to false positives</div>
<div class="t" style="left:956.75px;top:250.43px;font-size:18.6px;line-height:23.25px;font-weight:700;color:#2f6bd8;">5</div>
<div class="t" style="left:783.50px;top:289.40px;font-size:12.3px;line-height:15.38px;font-weight:700;color:#333;">Reduction in infections</div>
<div class="t" style="left:783.50px;top:309.20px;font-size:12.3px;line-height:15.38px;font-weight:700;color:#333;">compared to no testing</div>
<div class="t" style="left:956.75px;top:294.68px;font-size:18.6px;line-height:23.25px;font-weight:700;color:#2f6bd8;">67.43%</div>
<div class="b" style="left:383.00px;top:341.50px;width:796.00px;height:3.00px;background:#ebebeb;"></div>
<svg class="b" style="left:386px;top:365px" width="26" height="22" viewBox="0 0 26 22" fill="none" stroke="#1f3f6e" stroke-width="1.8"><path d="M2.5 1.5 V19.3 H23.8"/><path d="M5 14 L10.9 7.8 L14.7 11.9 L21.4 5.2"/></svg>
<div class="t" style="left:415.00px;top:366.43px;font-size:13.45px;line-height:16.81px;color:#444;">Community Prevalence</div>
<div class="t" style="left:387.60px;top:397.79px;font-size:13.8px;line-height:17.25px;color:#444;">To account for the introduction of</div>
<div class="t" style="left:387.60px;top:412.94px;font-size:13.8px;line-height:17.25px;color:#444;">infections from the surrounding (non-</div>
<div class="t" style="left:387.60px;top:428.09px;font-size:13.8px;line-height:17.25px;color:#444;">tested) community, select a profile</div>
<div class="t" style="left:387.60px;top:443.29px;font-size:13.8px;line-height:17.25px;color:#444;">which represents the rate of</div>
<div class="t" style="left:387.60px;top:458.09px;font-size:13.8px;line-height:17.25px;color:#444;">infections from outside interactions.</div>
<svg class="b" style="left:410.30px;top:488.80px" width="12.6" height="12.6" viewBox="0 0 12.6 12.6"><circle cx="6.3" cy="6.3" r="5.70" fill="#fff" stroke="#d4d4d4" stroke-width="1.1"/></svg>
<div class="t" style="left:430.30px;top:488.18px;font-size:13.3px;line-height:16.62px;color:#444;">low</div>
<svg class="b" style="left:462.70px;top:488.80px" width="12.6" height="12.6" viewBox="0 0 12.6 12.6"><circle cx="6.3" cy="6.3" r="6.3" fill="#3a7ae8"/><circle cx="6.3" cy="6.3" r="2.27" fill="#fff"/></svg>
<div class="t" style="left:482.30px;top:488.18px;font-size:13.3px;line-height:16.62px;color:#444;">medium</div>
<svg class="b" style="left:542.95px;top:488.80px" width="12.6" height="12.6" viewBox="0 0 12.6 12.6"><circle cx="6.3" cy="6.3" r="5.70" fill="#fff" stroke="#d4d4d4" stroke-width="1.1"/></svg>
<div class="t" style="left:562.40px;top:488.18px;font-size:13.3px;line-height:16.62px;color:#444;">high</div>
<svg class="b" style="left:824px;top:366px" width="26" height="25" viewBox="0 0 26 25"><circle cx="12.25" cy="12.5" r="10.75" fill="#2f6ae6"/><circle cx="21.6" cy="6.6" r="4.0" fill="#fff"/><path d="M21.7 2.6 Q24.2 5.8 24.1 7.2 A2.35 2.35 0 0 1 19.4 7.2 Q19.3 5.8 21.7 2.6 Z" fill="#2f6ae6"/><path d="M7 8.2 L9 9.8 L7 11.4" stroke="#fff" stroke-width="1.7" fill="none"/><path d="M16.6 8.2 L14.6 9.8 L16.6 11.4" stroke="#fff" stroke-width="1.7" fill="none"/><path d="M7.6 17.3 Q12.3 12.3 17 17.3" stroke="#fff" stroke-width="1.8" fill="none"/><path d="M2.2 13 Q5 12.3 6.2 14.2 L7.4 16.4" stroke="#fff" stroke-width="1.7" fill="none"/></svg>
<div class="t" style="left:857.50px;top:372.14px;font-size:13.6px;line-height:17.0px;color:#3a6fd8;">Infectious Population</div>
<svg class="b" style="left:0;top:0" width="1200" height="913" viewBox="0 0 1200 913">
<path d="M703.80,694.70 L708.03,700.14 L712.27,693.94 L716.50,683.83 L720.74,691.99 L724.97,681.91 L729.21,665.48 L733.44,682.13 L737.68,664.44 L741.91,635.57 L746.15,669.55 L750.38,641.14 L754.62,594.78 L758.86,651.88 L763.09,611.59 L767.32,545.84 L771.56,632.17 L775.79,567.95 L780.03,495.54 L784.26,609.74 L788.50,537.53 L792.73,456.11 L796.97,591.38 L801.20,521.10 L805.44,441.84 L809.67,583.23 L813.91,523.48 L818.14,456.11 L822.38,588.66 L826.62,542.66 L830.85,490.78 L835.08,609.06 L839.32,568.48 L843.55,522.73 L847.79,632.17 L852.02,598.94 L856.26,561.47 L860.50,652.56 L864.73,627.32 L868.96,598.86 L873.20,669.55 L877.43,650.70 L881.67,629.45 L885.90,681.11 L890.14,668.01 L894.38,653.24 L898.61,687.91 L902.85,679.92 L907.08,670.91 L911.31,692.67 L915.55,686.60 L919.78,679.75 L924.02,697.08 L928.25,691.81 L932.49,685.87 L936.72,699.12 L940.96,695.45 L945.19,691.31 L949.43,702.32 L953.66,699.06 L957.90,695.38 L962.13,703.88 L966.37,700.85 L970.61,697.42 L974.84,704.22 L979.08,701.67 L983.31,698.78 L987.54,704.56 L991.78,702.01 L996.01,699.12 L1000.25,704.90 L1004.48,702.35 L1008.72,699.46 L1012.95,704.90 L1017.19,702.35 L1021.42,699.46 L1025.66,704.90 L1029.89,702.35 L1034.13,699.46 L1038.37,704.90 L1042.60,702.35 L1046.84,699.46 L1051.07,704.90 L1055.31,702.66 L1059.54,700.14 L1063.78,705.24 L1068.01,703.16 L1072.24,700.82 L1076.48,705.24 L1080.71,703.16 L1084.95,700.82 L1089.18,704.90 L1093.42,702.51 L1097.65,699.80 L1101.89,704.22 L1106.12,701.35 L1110.36,698.10 L1114.60,702.18 L1118.83,700.27 L1123.07,698.10" fill="none" stroke="#cfcfcf" stroke-width="3" stroke-linejoin="miter" stroke-miterlimit="4"/>
<path d="M703.80,694.98 L708.03,699.46 L712.27,693.65 L716.50,684.17 L720.74,689.27 L724.97,680.74 L729.21,666.84 L733.44,676.35 L737.68,661.37 L741.91,636.93 L746.15,658.68 L750.38,636.21 L754.62,599.54 L758.86,637.61 L763.09,606.87 L767.32,556.72 L771.56,613.13 L775.79,565.53 L780.03,511.85 L784.26,591.38 L788.50,537.39 L792.73,476.51 L796.97,578.47 L801.20,522.88 L805.44,460.19 L809.67,575.75 L813.91,524.95 L818.14,467.67 L822.38,586.62 L826.62,544.77 L830.85,497.58 L835.08,607.02 L839.32,574.75 L843.55,538.36 L847.79,630.13 L852.02,607.13 L856.26,581.19 L860.50,650.52 L864.73,634.55 L868.96,616.53 L873.20,668.19 L877.43,656.69 L881.67,643.72 L885.90,679.75 L890.14,671.44 L894.38,662.08 L898.61,687.23 L902.85,680.84 L907.08,673.63 L911.31,691.99 L915.55,686.87 L919.78,681.11 L924.02,697.08 L928.25,692.13 L932.49,686.55 L936.72,699.12 L940.96,695.77 L945.19,691.99 L949.43,702.32 L953.66,699.38 L957.90,696.06 L962.13,703.88 L966.37,700.85 L970.61,697.42 L974.84,704.22 L979.08,701.67 L983.31,698.78 L987.54,704.56 L991.78,702.01 L996.01,699.12 L1000.25,704.90 L1004.48,702.35 L1008.72,699.46 L1012.95,704.90 L1017.19,702.35 L1021.42,699.46 L1025.66,704.90 L1029.89,702.35 L1034.13,699.46 L1038.37,704.90 L1042.60,702.35 L1046.84,699.46 L1051.07,704.90 L1055.31,702.66 L1059.54,700.14 L1063.78,705.24 L1068.01,703.16 L1072.24,700.82 L1076.48,705.24 L1080.71,703.16 L1084.95,700.82 L1089.18,704.90 L1093.42,702.51 L1097.65,699.80 L1101.89,704.22 L1106.12,701.35 L1110.36,698.10 L1114.60,702.18 L1118.83,700.27 L1123.07,698.10" fill="none" stroke="#4f8e48" stroke-width="3" stroke-linejoin="miter" stroke-miterlimit="4"/>
<path d="M700.5,425.5 V724.2 H1123" fill="none" stroke="#333" stroke-width="1.3"/>
<line x1="696" y1="708.30" x2="700.5" y2="708.30" stroke="#333" stroke-width="1"/>
<line x1="696" y1="674.31" x2="700.5" y2="674.31" stroke="#333" stroke-width="1"/>
<line x1="696" y1="640.32" x2="700.5" y2="640.32" stroke="#333" stroke-width="1"/>
<line x1="696" y1="606.34" x2="700.5" y2="606.34" stroke="#333" stroke-width="1"/>
<line x1="696" y1="572.35" x2="700.5" y2="572.35" stroke="#333" stroke-width="1"/>
<line x1="696" y1="538.36" x2="700.5" y2="538.36" stroke="#333" stroke-width="1"/>
<line x1="696" y1="504.37" x2="700.5" y2="504.37" stroke="#333" stroke-width="1"/>
<line x1="696" y1="470.39" x2="700.5" y2="470.39" stroke="#333" stroke-width="1"/>
<line x1="696" y1="436.40" x2="700.5" y2="436.40" stroke="#333" stroke-width="1"/>
<line x1="703.80" y1="724" x2="703.80" y2="728.5" stroke="#333" stroke-width="1"/>
<line x1="788.50" y1="724" x2="788.50" y2="728.5" stroke="#333" stroke-width="1"/>
<line x1="873.20" y1="724" x2="873.20" y2="728.5" stroke="#333" stroke-width="1"/>
<line x1="957.90" y1="724" x2="957.90" y2="728.5" stroke="#333" stroke-width="1"/>
<line x1="1042.60" y1="724" x2="1042.60" y2="728.5" stroke="#333" stroke-width="1"/>
</svg>
<div class="t" style="left:693.80px;top:702.79px;font-size:10px;line-height:12.5px;color:#333;transform:translateX(-100%);">0</div>
<div class="t" style="left:693.80px;top:668.80px;font-size:10px;line-height:12.5px;color:#333;transform:translateX(-100%);">5</div>
<div class="t" style="left:693.80px;top:634.81px;font-size:10px;line-height:12.5px;color:#333;transform:translateX(-100%);">10</div>
<div class="t" style="left:693.80px;top:600.82px;font-size:10px;line-height:12.5px;color:#333;transform:translateX(-100%);">15</div>
<div class="t" style="left:693.80px;top:566.84px;font-size:10px;line-height:12.5px;color:#333;transform:translateX(-100%);">20</div>
<div class="t" style="left:693.80px;top:532.85px;font-size:10px;line-height:12.5px;color:#333;transform:translateX(-100%);">25</div>
<div class="t" style="left:693.80px;top:498.86px;font-size:10px;line-height:12.5px;color:#333;transform:translateX(-100%);">30</div>
<div class="t" style="left:693.80px;top:464.87px;font-size:10px;line-height:12.5px;color:#333;transform:translateX(-100%);">35</div>
<div class="t" style="left:693.80px;top:430.88px;font-size:10px;line-height:12.5px;color:#333;transform:translateX(-100%);">40</div>
<div class="t" style="left:703.80px;top:731.09px;font-size:10px;line-height:12.5px;color:#333;transform:translateX(-50%);">0</div>
<div class="t" style="left:788.50px;top:731.09px;font-size:10px;line-height:12.5px;color:#333;transform:translateX(-50%);">20</div>
<div class="t" style="left:873.20px;top:731.09px;font-size:10px;line-height:12.5px;color:#333;transform:translateX(-50%);">40</div>
<div class="t" style="left:957.90px;top:731.09px;font-size:10px;line-height:12.5px;color:#333;transform:translateX(-50%);">60</div>
<div class="t" style="left:1042.60px;top:731.09px;font-size:10px;line-height:12.5px;color:#333;transform:translateX(-50%);">80</div>
<div class="t" style="left:914.20px;top:750.84px;font-size:11.8px;line-height:14.75px;color:#333;transform:translateX(-50%);">days</div>
<div class="t" style="left:660.5px;top:573.2px;font-size:12.3px;line-height:14px;color:#333;transform:translate(-50%,-50%) rotate(-90deg);">number of infected people</div>
<div class="t" style="left:649.40px;top:773.07px;font-size:13.72px;line-height:17.15px;color:#444;">The plot above shows the number of infectious people in the population for the</div>
<div class="t" style="left:649.40px;top:787.67px;font-size:13.72px;line-height:17.15px;color:#444;">duration of the testing period. The jagged nature corresponds to the removal of</div>
<div class="t" style="left:649.40px;top:802.27px;font-size:13.72px;line-height:17.15px;color:#444;">infectious individuals after they receive a positive test (if they comply with</div>
<div class="t" style="left:649.40px;top:816.87px;font-size:13.72px;line-height:17.15px;color:#444;">isolation).</div>
</body></html>
